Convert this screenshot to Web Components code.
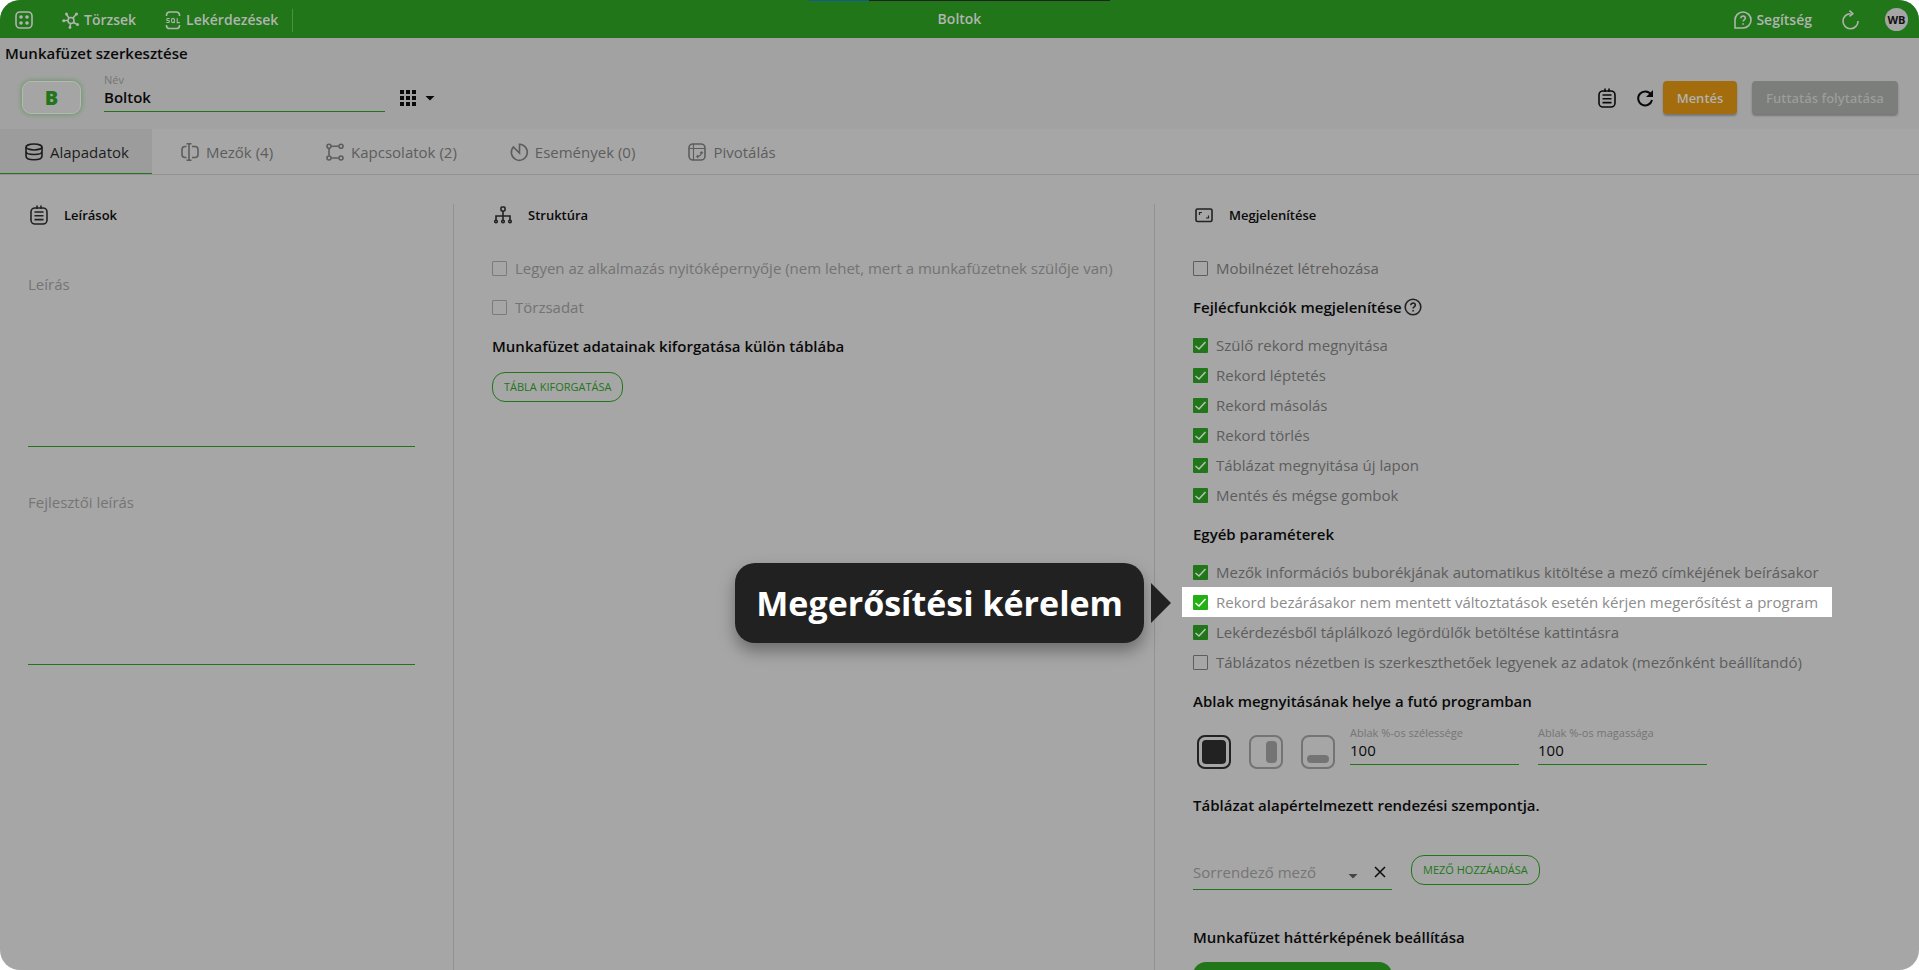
<!DOCTYPE html>
<html lang="hu">
<head>
<meta charset="utf-8">
<title>Boltok</title>
<style>
html, body { margin: 0; height: 100%; background: #fff; }
body {
  --green: #22761a; --page: #a6a6a6; --band: #a2a2a2; --line: #929292;
  --ink: #0a0a0a; --text: #5d5d5d; --muted: #757575;
  font: 15px/20px "Open Sans", "Noto Sans", sans-serif; color: var(--ink);
}
</style>
</head>
<body>
<app-frame>
  <top-bar slot="top"></top-bar>
  <book-header slot="head"></book-header>
  <tab-bar slot="tabs">
    <tab-item icon="database" active>Alapadatok</tab-item>
    <tab-item icon="field">Mezők (4)</tab-item>
    <tab-item icon="relation">Kapcsolatok (2)</tab-item>
    <tab-item icon="event">Események (0)</tab-item>
    <tab-item icon="pivot">Pivotálás</tab-item>
  </tab-bar>

  <panel-column icon="notes" heading="Leírások">
    <memo-field label="Leírás"></memo-field>
    <memo-field label="Fejlesztői leírás"></memo-field>
  </panel-column>

  <panel-column icon="tree" heading="Struktúra" divided>
    <check-row spaced disabled>Legyen az alkalmazás nyitóképernyője (nem lehet, mert a munkafüzetnek szülője van)</check-row>
    <check-row spaced disabled>Törzsadat</check-row>
    <group-title>Munkafüzet adatainak kiforgatása külön táblába</group-title>
    <pill-button>TÁBLA KIFORGATÁSA</pill-button>
  </panel-column>

  <panel-column icon="screen" heading="Megjelenítése" divided>
    <check-row spaced>Mobilnézet létrehozása</check-row>
    <group-title help>Fejlécfunkciók megjelenítése</group-title>
    <check-row checked>Szülő rekord megnyitása</check-row>
    <check-row checked>Rekord léptetés</check-row>
    <check-row checked>Rekord másolás</check-row>
    <check-row checked>Rekord törlés</check-row>
    <check-row checked>Táblázat megnyitása új lapon</check-row>
    <check-row checked>Mentés és mégse gombok</check-row>
    <group-title>Egyéb paraméterek</group-title>
    <check-row checked>Mezők információs buborékjának automatikus kitöltése a mező címkéjének beírásakor</check-row>
    <check-row checked highlighted>Rekord bezárásakor nem mentett változtatások esetén kérjen megerősítést a program<call-out slot="callout">Megerősítési kérelem</call-out></check-row>
    <check-row checked>Lekérdezésből táplálkozó legördülők betöltése kattintásra</check-row>
    <check-row>Táblázatos nézetben is szerkeszthetőek legyenek az adatok (mezőnként beállítandó)</check-row>
    <group-title>Ablak megnyitásának helye a futó programban</group-title>
    <window-place></window-place>
    <group-title>Táblázat alapértelmezett rendezési szempontja.</group-title>
    <sort-picker></sort-picker>
    <group-title>Munkafüzet háttérképének beállítása</group-title>
    <upload-button></upload-button>
  </panel-column>
</app-frame>

<script>
const RESET = `*,:host{box-sizing:border-box}
  button,input,select,textarea{font:inherit;color:inherit;background:none;border:0;margin:0;padding:0;border-radius:0;outline:0;appearance:none}
  button{cursor:pointer;white-space:nowrap} button ui-icon{display:block} a{color:inherit;text-decoration:none}`;

function define(name, render) {
  customElements.define(name, class extends HTMLElement {
    connectedCallback() {
      if (this.shadowRoot) return;
      const root = this.attachShadow({ mode: 'open' });
      const t = document.createElement('template');
      t.innerHTML = `<style>${RESET}</style>` + render(this);
      root.append(t.content.cloneNode(true));
    }
  });
}

/* Every icon is drawn on an 18 × 18 grid. */
const ICONS = {
  apps: '<rect x="1" y="1" width="16" height="16" rx="4"/><g fill="currentColor" stroke="none"><circle cx="6" cy="6" r="1.8"/><circle cx="12" cy="6" r="1.8"/><circle cx="6" cy="12" r="1.8"/><circle cx="12" cy="12" r="1.8"/></g>',
  hub: '<circle cx="9" cy="9.5" r="3"/><path d="M6 9.5H2M7 7 4.5 3.5M11 7l3-3.500M11.500 11.500l3 1.500M8.500 12.500 8 16"/><g fill="currentColor" stroke="none"><circle cx="1.700" cy="9.700" r="1.500"/><circle cx="4.500" cy="3" r="1.500"/><circle cx="14.500" cy="3" r="1.500"/><circle cx="15.500" cy="13.500" r="1.500"/><circle cx="8" cy="16.500" r="1.400"/></g>',
  query: '<path d="M2.500 5V4a3 3 0 0 1 3-3h7a3 3 0 0 1 3 3v1M2.500 14v1a3 3 0 0 0 3 2.500h7a3 3 0 0 0 3-2.500v-1"/><path stroke-width="1.100" d="M5.700 7.500H3.600c-1.200 0-1.200 2 0 2h.8c1.300 0 1.300 2 0 2H2.400M9 7.400c-2.100 0-2.100 4.200 0 4.200s2.100-4.200 0-4.200M9.500 10.500l1.200 1.400M13.200 7.200v4.400h2.600"/>',
  bubble: '<path d="M1 17V9a8 8 0 1 1 8 8z"/><path d="M6.800 7.200c0-3 4.700-2.800 4.500 0-.1 1.600-2.200 1.700-2.200 3.400M9.100 12.300v1.400"/>',
  reload: '<path d="M9.500 2.700A7.500 7.500 0 1 0 17 10"/><path d="M8.500-.3l3.300 3-3.300 2.600"/>',
  refresh: '<path stroke-width="2" d="M15 5.500A7 7 0 1 0 16 11"/><path fill="currentColor" stroke="none" d="M17 1v7h-7z"/>',
  notes: '<rect x="1" y="2" width="16" height="16" rx="4"/><path d="M4.500 6h9M4.500 9.800h9M4.500 13.600h9M7-.5v3.500M11-.5v3.500"/>',
  grid9: '<path fill="currentColor" stroke="none" d="M1 1h4v4H1zM7 1h4v4H7zM13 1h4v4h-4zM1 7h4v4H1zM7 7h4v4H7zM13 7h4v4h-4zM1 13h4v4H1zM7 13h4v4H7zM13 13h4v4h-4z"/>',
  caret: '<path fill="currentColor" stroke="none" d="M4.500 7h9l-4.500 4.500z"/>',
  database: '<ellipse cx="9" cy="4" rx="8" ry="3"/><path d="M1 4v4.500c0 4 16 4 16 0V4M1 8.500V13c0 5 16 5 16 0V8.500"/>',
  field: '<path d="M5.500 3.500H4a3 3 0 0 0-3 3v5a3 3 0 0 0 3 3h1.500M11 3.500h3a3 3 0 0 1 3 3v5a3 3 0 0 1-3 3h-3M8 1v16M5.500 .800h5M5.500 17.200h5"/>',
  relation: '<circle cx="3" cy="3.300" r="2"/><circle cx="15" cy="3.300" r="2"/><circle cx="3" cy="15" r="2"/><circle cx="15" cy="15" r="2"/><path d="M5.500 3.300h7M3 5.500v7M5.500 15h7"/>',
  event: '<path d="M9.500 1.300A8 8 0 1 1 3.300 4L9.500 10z"/>',
  pivot: '<rect x="1" y="1" width="16" height="16" rx="4"/><path stroke-width="1.100" d="M1 5.500h16M5.500 1v16M9 13.500c3 0 4.500-1.500 4.500-4.500M10.300 12l-1.500 1.500 1.500 1.500M12 10.300l1.500-1.500L15 10.300"/>',
  tree: '<rect x="7" y="1" width="4" height="4" rx="1"/><path d="M9 5v9M2 14v-4h14v4"/><circle cx="2" cy="15.500" r="1.300"/><circle cx="9" cy="15.500" r="1.300"/><circle cx="16" cy="15.500" r="1.300"/>',
  screen: '<rect x="1" y="3" width="16" height="12.500" rx="1.500"/><path stroke-width="1.200" d="M4.500 9V6.500H7M11 12h2.500V9.500"/>',
  help: '<circle cx="9" cy="9" r="7.800"/><path d="M6.800 7.200c0-3 4.700-2.800 4.500 0-.1 1.600-2.200 1.700-2.200 3.200M9.100 12v1.500"/>',
  close: '<path d="M4 4l10 10M14 4 4 14"/>'
};
define('ui-icon', el => `<style>:host{display:inline-block;width:18px;height:18px;flex:none}svg{display:block;width:100%;height:100%;overflow:visible}</style>
  <svg viewBox="0 0 18 18" fill="none" stroke="currentColor" stroke-width="1.600" aria-hidden="true">${ICONS[el.getAttribute('name')]}</svg>`);

define('app-frame', () => `<style>
  :host{display:flex;flex-direction:column;height:100vh;overflow:hidden;border-radius:20px;background:var(--page)}
  main{flex:1;min-height:0;display:grid;grid-template-columns:453fr 701fr 765fr;padding-top:29px}
  </style><slot name="top"></slot><slot name="head"></slot><slot name="tabs"></slot><main><slot></slot></main>`);

define('top-bar', () => `<style>
  :host{display:block;background:var(--green);color:#b0b5b0;font-size:14px;font-weight:600}
  header{display:grid;grid-template-columns:1fr auto 1fr;align-items:center;height:38px;position:relative}
  nav{display:flex;align-items:center;padding:2px 0 0 15px}
  a{display:flex;align-items:center;gap:4px}
  .apps{margin-right:29px}.q{margin-left:28px}
  i{width:1px;height:23px;background:#4e8f48;margin-left:14px}
  .right{display:flex;align-items:center;justify-content:flex-end;padding-right:11px}
  .right a,.re{padding-top:2px}
  .re{margin:0 26px 0 29px}
  .me{width:23px;height:23px;border-radius:50%;background:#a6a6a6;color:#111;font-size:11px;line-height:23px;font-weight:700;text-align:center}
  .load{position:absolute;top:0;left:50%;margin-left:-151px;width:301px;height:1px;background:linear-gradient(90deg,#12599a 20%,#222 20%)}
  </style>
  <header><nav><button class="apps" aria-label="Alkalmazások"><ui-icon name="apps"></ui-icon></button>
  <a href="#torzsek"><ui-icon name="hub"></ui-icon>Törzsek</a><a class="q" href="#lekerdezesek"><ui-icon name="query"></ui-icon>Lekérdezések</a><i></i></nav>
  <span>Boltok</span>
  <div class="right"><a href="#segitseg"><ui-icon name="bubble"></ui-icon>Segítség</a>
  <button class="re" aria-label="Újratöltés"><ui-icon name="reload"></ui-icon></button><button class="me">WB</button></div>
  <div class="load"></div></header>`);

define('line-field', el => `<style>
  :host{display:block}
  label{display:block;font-size:11px;line-height:14px;color:var(--muted)}
  input{display:block;width:100%;height:25px;padding-bottom:5px;border-bottom:1px solid var(--green);line-height:20px;font-weight:var(--value-weight,400)}
  </style><label for="f">${el.getAttribute('label')}</label><input id="f" value="${el.getAttribute('value')}">`);

define('book-header', () => `<style>
  :host{display:block;background:var(--band);height:91px;padding:5px 21px 0 5px}
  h1{margin:0;font-size:15px;line-height:20px;font-weight:600}
  .row{display:flex;align-items:flex-start;padding:10px 0 0 17px}
  .badge{width:59px;height:33px;margin-top:8px;border-radius:9px;background:#a5a5a5;border:1px solid #b4b9b3;box-shadow:0 0 4px 1px #6f9a6b;color:var(--green);font-size:20px;line-height:31px;font-weight:800;text-align:center}
  line-field{width:281px;margin-left:23px;--value-weight:600}
  .pick{display:flex;align-items:center;gap:4px;margin:16px 0 0 14px}
  .tools{display:flex;align-items:center;margin:8px 0 0 auto}
  .r{margin:0 9px 0 20px}
  .b{height:33px;border-radius:4px;font-size:13px;font-weight:600;color:#b2b2b2;box-shadow:0 2px 2px #777}
  .save{background:#a36d0d;width:74px}.run{background:#7b7e7b;width:146px;margin-left:15px;color:#9c9c9c}
  </style><h1>Munkafüzet szerkesztése</h1>
  <div class="row"><div class="badge">B</div><line-field label="Név" value="Boltok"></line-field>
  <button class="pick" aria-label="Ikon választása"><ui-icon name="grid9"></ui-icon><ui-icon name="caret"></ui-icon></button>
  <div class="tools"><button aria-label="Jegyzet"><ui-icon name="notes"></ui-icon></button><button class="r" aria-label="Frissítés"><ui-icon name="refresh"></ui-icon></button>
  <button class="b save">Mentés</button><button class="b run">Futtatás folytatása</button></div></div>`);

define('tab-bar', () => `<style>:host{display:flex;height:46px;border-bottom:1px solid var(--line)}</style><slot></slot>`);
define('tab-item', el => `<style>
  :host{display:block;color:var(--text)}
  :host([active]){color:#1c1c1c;background:#9c9c9c;box-shadow:inset 0 -1px var(--green)}
  button{display:flex;align-items:center;gap:7px;height:45px;padding:0 23px 0 25px}
  :host(:not([active])) button{padding:0 24px 0 29px}
  </style><button role="tab"><ui-icon name="${el.getAttribute('icon')}"></ui-icon><span><slot></slot></span></button>`);

define('panel-column', el => `<style>
  :host{display:block;min-width:0;padding:0 38px 0 28px}
  :host([divided]){border-left:1px solid var(--line);padding-left:38px}
  h2{display:flex;align-items:center;gap:16px;margin:0 0 27px;padding-left:2px;height:22px;font-size:13px;line-height:20px;font-weight:600}
  ui-icon{color:#222}
  </style><h2><ui-icon name="${el.getAttribute('icon')}"></ui-icon>${el.getAttribute('heading')}</h2><slot></slot>`);

define('memo-field', el => `<style>
  :host{display:block;margin-bottom:24px;padding-top:21px}
  :host(:first-child){padding-top:21px}
  label{display:block;color:var(--muted)}
  textarea{display:block;width:100%;height:153px;resize:none;border-bottom:1px solid var(--green)}
  </style><label for="m">${el.getAttribute('label')}</label><textarea id="m"></textarea>`);

define('check-row', el => `<style>
  :host{display:block;color:var(--text)}
  :host([spaced]){margin:9px 0}
  :host([disabled]){color:#737373}
  .row{display:flex;width:fit-content;align-items:center;height:30px;position:relative;white-space:nowrap}
  :host([highlighted]) .row{background:#fff;margin-left:-11px;padding:0 14px 0 11px;color:#8c8c8c;--green:#22b014}
  label{display:flex;align-items:center;gap:8px}
  input{flex:none;width:15px;height:15px;border:1px solid #5d5d5d;border-radius:1px}
  input:disabled{border-color:#7b7b7b}
  input:checked{border:0;background:var(--green)}
  .box{display:grid;flex:none}.box>*{grid-area:1/1}
  svg{pointer-events:none;width:15px;height:15px;stroke:#b9c4b8;fill:none;stroke-width:1.500;visibility:hidden}
  input:checked+svg{visibility:visible}
  :host([highlighted]) svg{stroke:#fff}
  </style><div class="row"><label><span class="box"><input type="checkbox"${el.hasAttribute('checked') ? ' checked' : ''}${el.hasAttribute('disabled') ? ' disabled' : ''}><svg viewBox="0 0 15 15"><path d="M2.500 8l3.500 3 6.500-7"/></svg></span><span><slot></slot></span></label><slot name="callout"></slot></div>`);

define('call-out', () => `<style>
  :host{position:absolute;right:calc(100% + 38px);top:50%;margin-top:-39px;height:80px;padding:0 21px;border-radius:20px;background:#212121;color:#fff;font-size:34px;line-height:80px;font-weight:700;white-space:nowrap;box-shadow:0 8px 16px rgba(0,0,0,.35)}
  :host::after{content:"";position:absolute;left:calc(100% + 7px);top:20px;border:solid transparent;border-width:20px 0 20px 20px;border-left-color:#212121}
  </style><slot></slot>`);

define('group-title', el => `<style>
  :host{display:flex;align-items:center;gap:2px;height:30px;margin:9px 0 8px;font-weight:600}
  h3{margin:0;font:inherit}
  ui-icon{color:#222}
  </style><h3><slot></slot></h3>${el.hasAttribute('help') ? '<button aria-label="Súgó"><ui-icon name="help"></ui-icon></button>' : ''}`);

define('pill-button', () => `<style>:host{display:block;padding-top:3px}
  button{height:30px;padding:0 11px;border:1px solid var(--green);border-radius:13px;color:var(--green);font-size:11px}
  </style><button><slot></slot></button>`);

define('window-place', () => `<style>
  :host{display:flex;align-items:flex-start;padding:2px 0 12px}
  fieldset{display:flex;gap:18px;border:0;margin:9px 15px 0 4px;padding:0}
  label{position:relative;display:block;width:34px;height:34px;color:#747474}
  label:has(:checked){color:#222}
  input[type=radio]{display:block;width:34px;height:34px;border:2px solid currentColor;border-radius:8px}
  span{position:absolute;background:currentColor;border-radius:4px;pointer-events:none}
  .full{inset:5px}.side{inset:6px 6px 6px 17px}.bottom{inset:20px 6px 6px 6px}
  line-field{width:169px}line-field+line-field{margin-left:19px}
  </style><fieldset aria-label="Ablak helye">
  <label><input type="radio" name="p" aria-label="Teljes" checked><span class="full"></span></label>
  <label><input type="radio" name="p" aria-label="Oldalt"><span class="side"></span></label>
  <label><input type="radio" name="p" aria-label="Alul"><span class="bottom"></span></label></fieldset>
  <line-field label="Ablak %-os szélessége" value="100"></line-field><line-field label="Ablak %-os magassága" value="100"></line-field>`);

define('sort-picker', () => `<style>
  :host{display:flex;align-items:flex-start;gap:19px;padding:27px 0 23px}
  .box{display:flex;align-items:center;width:199px;height:35px;border-bottom:1px solid var(--green);color:var(--muted)}
  .pick{position:relative;flex:1}
  select{display:block;width:100%}
  .pick ui-icon{position:absolute;right:0;top:5px;color:#444;pointer-events:none}
  button{color:#111;margin:0 3px 0 9px}
  pill-button{padding:0}
  </style><div class="box"><div class="pick"><select aria-label="Sorrendező mező"><option>Sorrendező mező</option></select><ui-icon name="caret"></ui-icon></div>
  <button aria-label="Törlés"><ui-icon name="close"></ui-icon></button></div><pill-button>MEZŐ HOZZÁADÁSA</pill-button>`);

define('upload-button', () => `<style>:host{display:block;padding-top:2px}button{display:block;width:199px;height:30px;border-radius:13px;background:var(--green)}</style><button aria-label="Háttérkép feltöltése"></button>`);
</script>
</body>
</html>
